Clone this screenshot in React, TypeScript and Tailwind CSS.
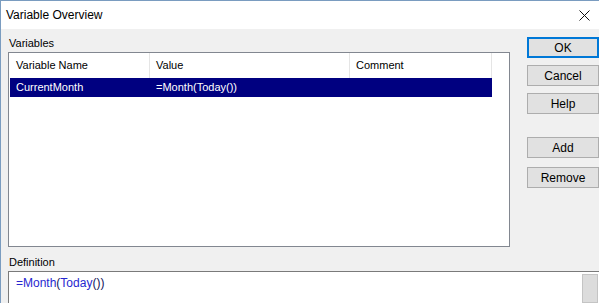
const font = { fontFamily: '"Liberation Sans", Arial, sans-serif' };

interface Btn {
  label: string;
  mt: string;
  focused?: boolean;
}

const buttons: Btn[] = [
  { label: "OK", mt: "mt-0", focused: true },
  { label: "Cancel", mt: "mt-[7px]" },
  { label: "Help", mt: "mt-[7px]" },
  { label: "Add", mt: "mt-[23px]" },
  { label: "Remove", mt: "mt-[9px]" },
];

export default function App() {
  return (
    <div
      className="w-[599px] h-[303px] overflow-hidden bg-white border-l border-t border-[#7a9cc0] flex flex-col text-[11px] text-black"
      style={font}
    >
      {/* title bar */}
      <div className="h-[28px] shrink-0 flex items-center justify-between pl-[5px] pr-[9px] bg-white">
        <span className="text-[12px]">Variable Overview</span>
        <svg width="11" height="11" viewBox="0 0 11 11" className="mt-[1px]">
          <path d="M0.5 0.5 L10.5 10.5 M10.5 0.5 L0.5 10.5" stroke="#111" strokeWidth="1" fill="none" />
        </svg>
      </div>

      {/* body */}
      <div className="h-[226px] shrink-0 bg-[#f0f0f0] flex">
        <div className="w-[509px] pl-[7px] pt-[7px] flex flex-col">
          <div className="h-[16px] leading-[14px] pl-[1px]">Variables</div>
          <div className="h-[195px] bg-white border border-[#828790] flex flex-col">
            <div className="h-[25px] flex items-stretch pl-[1px]">
              <div className="w-[140px] border-r border-[#e5e5e5] flex items-center pl-[6px]">Variable Name</div>
              <div className="w-[200px] border-r border-[#e5e5e5] flex items-center pl-[6px]">Value</div>
              <div className="w-[142px] border-r border-[#e5e5e5] flex items-center pl-[6px]">Comment</div>
            </div>
            <div className="ml-[1px] w-[482px] h-[19px] bg-[#000080] text-white flex items-center">
              <div className="w-[140px] pl-[6px]">CurrentMonth</div>
              <div className="w-[200px] pl-[6px]">=Month(Today())</div>
            </div>
          </div>
        </div>
        <div className="pl-[17px] pt-[8px] flex flex-col">
          {buttons.map((b) => (
            <div
              key={b.label}
              className={`${b.mt} w-[72px] h-[21px] flex items-center justify-center bg-[#e1e1e1] text-[12px] ${
                b.focused ? "border-2 border-[#0078d7]" : "border border-[#adadad]"
              }`}
            >
              {b.label}
            </div>
          ))}
        </div>
      </div>

      {/* definition */}
      <div className="flex-1 bg-[#f0f0f0] pl-[7px] flex flex-col">
        <div className="h-[16px] leading-[14px] pl-[1px]">Definition</div>
        <div className="flex-1 bg-white border-t border-l border-[#7a7a7a] flex justify-between">
          <div className="pl-[7px] pt-[4px] text-[12px] leading-[14px]">
            <span className="text-[#2727d0]">=Month</span>
            <span className="text-[#12125a]">(</span>
            <span className="text-[#2727d0]">Today</span>
            <span className="text-[#12125a]">())</span>
          </div>
          <div className="mt-[2px] mr-[1px] w-[16px] bg-[#dcdcdc] border border-[#c4c4c4]" />
        </div>
      </div>
    </div>
  );
}
